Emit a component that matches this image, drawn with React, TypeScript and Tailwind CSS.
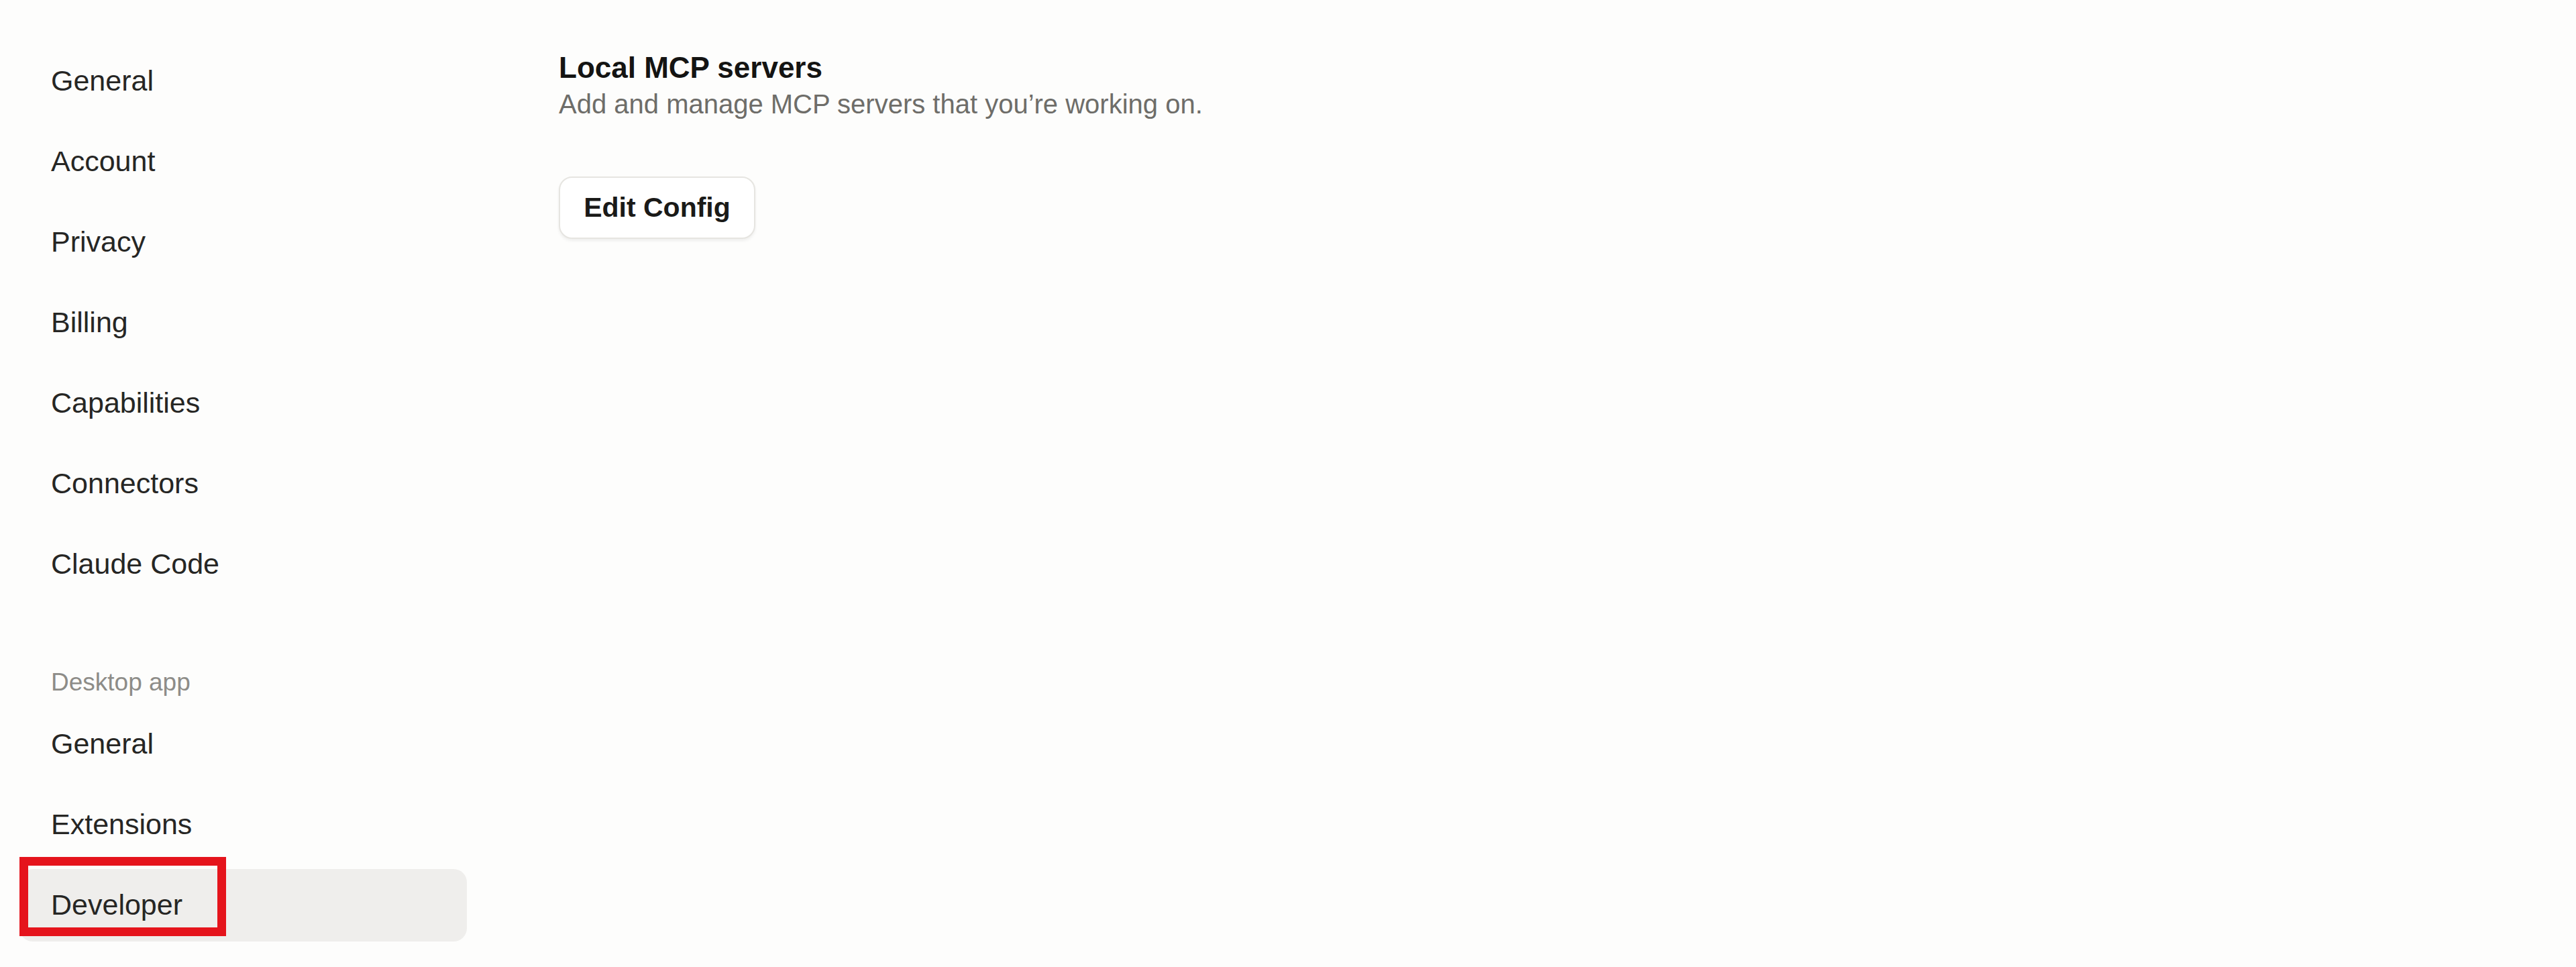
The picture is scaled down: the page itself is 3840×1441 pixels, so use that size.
import React from 'react';

const accountItems = ['General', 'Account', 'Privacy', 'Billing', 'Capabilities', 'Connectors', 'Claude Code'];
const desktopItems = ['General', 'Extensions', 'Developer'];

const NavItem: React.FC<{ label: string; active?: boolean }> = ({ label, active }) => (
    <div
        className={`relative flex h-[108px] items-center rounded-[20px] pl-[47px] pb-[2px] text-[43px] text-[#262624] ${
            active ? 'bg-[#efeeec]' : ''
        }`}
    >
        {label}
        {active && (
            // red callout drawn around the active entry
            <span className="pointer-events-none absolute left-0 top-[-18px] h-[118px] w-[308px] border-[13px] border-[#e5141c]" />
        )}
    </div>
);

const App: React.FC = () => {
    return (
        <div className="flex min-h-screen w-full bg-[#fdfdfc] font-['Liberation_Sans',Arial,sans-serif]">
            {/* Settings nav */}
            <nav className="flex w-[696px] shrink-0 flex-col pl-[29px] pt-[67px]">
                <div className="flex flex-col gap-[12px]">
                    {accountItems.map((item) => (
                        <NavItem key={item} label={item} />
                    ))}
                </div>
                <div className="mb-[16px] mt-[100px] pl-[47px] text-[37px] leading-[44px] text-[#8d8c88]">Desktop app</div>
                <div className="flex flex-col gap-[12px]">
                    {desktopItems.map((item) => (
                        <NavItem key={item} label={item} active={item === 'Developer'} />
                    ))}
                </div>
            </nav>

            {/* Developer panel */}
            <main className="flex flex-col items-start pl-[137px] pt-[75px]">
                <h2 className="text-[44px] font-semibold leading-[52px] text-[#141413]">Local MCP servers</h2>
                <p className="mt-[4px] text-[40px] leading-[48px] text-[#6e6d69]">
                    Add and manage MCP servers that you’re working on.
                </p>
                <button className="mt-[84px] flex h-[93px] w-[293px] items-center justify-center rounded-[20px] border-2 border-[#e6e5e1] bg-white text-[41px] font-semibold text-[#1a1a18] shadow-[0_3px_4px_rgba(0,0,0,0.06)]">
                    Edit Config
                </button>
            </main>
        </div>
    );
};

export default App;
